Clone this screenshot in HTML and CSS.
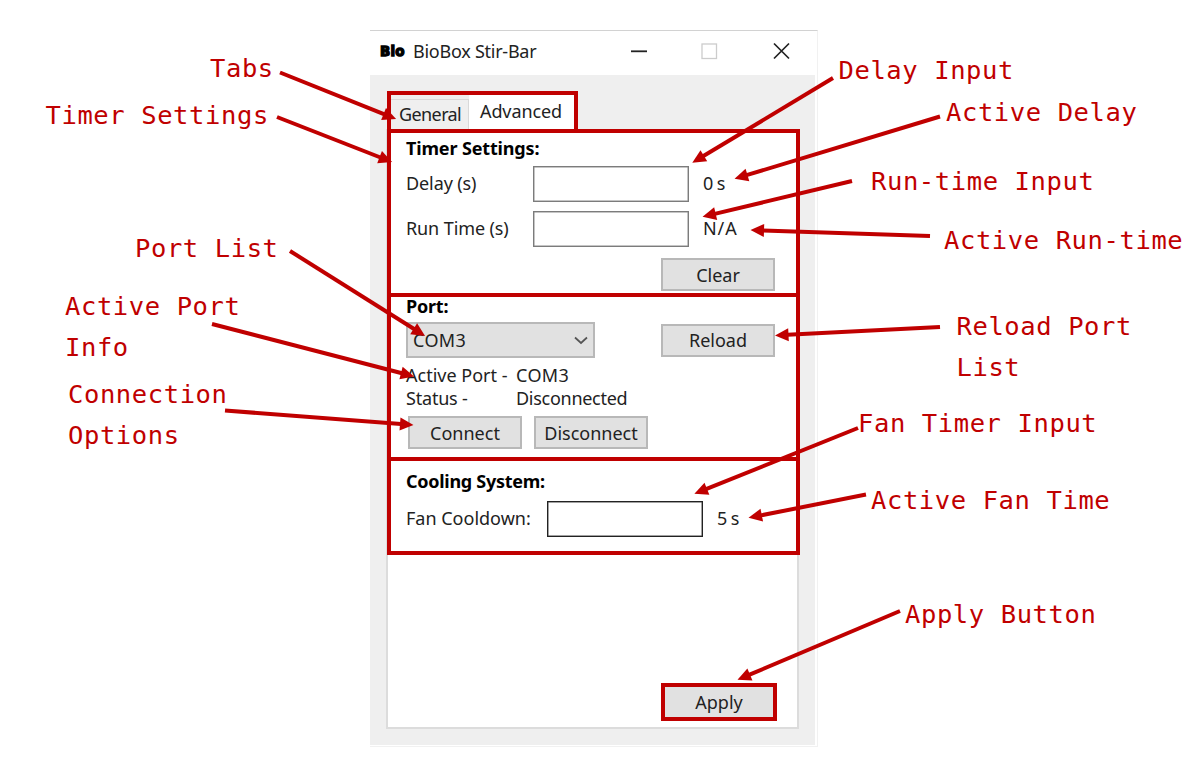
FILE: index.html
```html
<!DOCTYPE html>
<html lang="en">
<head>
<meta charset="utf-8">
<title>BioBox Stir-Bar</title>
<link rel="stylesheet" href="styles.css">
</head>
<body>
<main class="figure">
  <section class="window">
    <header class="titlebar">
      <span class="logo">Bio</span>
      <span class="title">BioBox Stir-Bar</span>
      <svg class="controls" width="160" height="18" viewBox="0 0 160 18">
        <path d="M1 9.3H17" stroke="#222" stroke-width="1.8"/>
        <rect x="72" y="2" width="14.500" height="14.500" fill="none" stroke="#ccc" stroke-width="1.3"/>
        <path d="M144 1.500L159 16.500M159 1.500L144 16.500" stroke="#222" stroke-width="1.7"/>
      </svg>
    </header>
    <div class="body">
      <nav class="tabs">
        <span class="tab general">General</span>
        <span class="tab active">Advanced</span>
      </nav>
      <div class="panel">
        <section class="group timer">
          <h2 class="heading w-timer">Timer Settings:</h2>
          <div class="field"><span class="w-delay">Delay (s)</span><i class="input"></i><span class="w-zero">0 s</span></div>
          <div class="field"><span class="w-run">Run Time (s)</span><i class="input"></i><span class="w-na">N/A</span></div>
          <button class="button end"><span class="w-clear">Clear</span></button>
        </section>
        <section class="group port">
          <h2 class="heading w-port">Port:</h2>
          <div class="port-row">
            <div class="combo"><span class="w-com">COM3</span>
              <svg width="14" height="9" viewBox="0 0 14 9"><path d="M1 1.500L7 7L13 1.500" fill="none" stroke="#555" stroke-width="1.7"/></svg>
            </div>
            <button class="button"><span class="w-reload">Reload</span></button>
          </div>
          <div class="info">
            <span class="w-active">Active Port -</span><span class="w-com">COM3</span>
            <span class="w-status">Status -</span><span class="w-disc">Disconnected</span>
          </div>
          <div class="buttons">
            <button class="button"><span class="w-connect">Connect</span></button>
            <button class="button"><span class="w-disconnect">Disconnect</span></button>
          </div>
        </section>
        <section class="group cooling">
          <h2 class="heading w-cooling">Cooling System:</h2>
          <div class="field fan"><span class="w-fan">Fan Cooldown:</span><i class="input dark"></i><span class="w-zero">5 s</span></div>
        </section>
        <button class="button apply"><span class="w-apply">Apply</span></button>
      </div>
    </div>
  </section>

  <svg class="callouts" width="1188" height="770" viewBox="0 0 1188 770">
    <defs>
      <marker id="head" markerUnits="userSpaceOnUse" markerWidth="20" markerHeight="16" refX="2" refY="7" orient="auto" overflow="visible">
        <path d="M1 0.500L14.500 7L1 13.500Z" fill="#c00000"/>
      </marker>
    </defs>
    <g class="arrows">
      <path d="M280 72.500L384.500 114.400"/>
      <path d="M277 117L380.500 157.500"/>
      <path d="M290 251L414.500 329.300"/>
      <path d="M212 324L402 373.300"/>
      <path d="M225 410.500L401 424"/>
      <path d="M833 78L703 156.300"/>
      <path d="M940 116.500L746.500 175.200"/>
      <path d="M852 181L714.700 213.900"/>
      <path d="M930 236L763 230.400"/>
      <path d="M940 327L787.500 334.800"/>
      <path d="M858 428L706 489.200"/>
      <path d="M866 494.500L760.800 515.400"/>
      <path d="M900 611L749 674.900"/>
    </g>
    <g class="labels">
      <text x="210" y="77">Tabs</text>
      <text x="45.500" y="124">Timer Settings</text>
      <text x="135" y="257">Port List</text>
      <text x="65" y="315">Active Port</text>
      <text x="65" y="356">Info</text>
      <text x="68" y="403">Connection</text>
      <text x="68" y="444">Options</text>
      <text x="838.500" y="79">Delay Input</text>
      <text x="946" y="121">Active Delay</text>
      <text x="871" y="190">Run-time Input</text>
      <text x="944" y="249">Active Run-time</text>
      <text x="956.500" y="335">Reload Port</text>
      <text x="956.500" y="376">List</text>
      <text x="858" y="432">Fan Timer Input</text>
      <text x="871" y="509">Active Fan Time</text>
      <text x="905" y="623">Apply Button</text>
    </g>
  </svg>
</main>
</body>
</html>
```
FILE: styles.css
```css
* { box-sizing: border-box; }

body {
  margin: 0;
  background: #fff;
  color: #222;
  font: 18px/24px "Noto Sans", sans-serif;
}

.figure {
  position: relative;
  width: 1188px;
  height: 770px;
  padding: 30px 370px 23px;
  overflow: hidden;
}

.window {
  width: 448px;
  height: 717px;
  border-top: 1px solid #d2d2d2;
  border-right: 1px solid #f1f1f1;
  border-bottom: 1px solid #f1f1f1;
  padding: 0 2px 1px 0;
}

.titlebar {
  display: flex;
  align-items: center;
  height: 44px;
  padding: 0 25px 4px 10px;
}

.logo {
  width: 33px;
  color: #000;
  font: bold 13.5px/22px "DejaVu Sans", sans-serif;
  letter-spacing: 0.2px;
  -webkit-text-stroke: 1.3px #000;
}

.title { letter-spacing: -0.25px; }

.controls { margin-left: auto; }

.body {
  height: 670px;
  padding: 16px 0 0 16px;
  background: #efefef;
}

.tabs {
  display: flex;
  align-items: flex-end;
  position: relative;
  width: 191px;
  height: 42px;
  margin-left: 1px;
  border: 4px solid #c00000;
}

.tab { height: 30px; line-height: 28px; }

.general {
  width: 78px;
  padding-left: 8px;
  border-top: 1px solid #d9d9d9;
  border-right: 1px solid #d9d9d9;
  letter-spacing: -0.6px;
}

.active {
  flex: 1;
  height: 34px;
  padding-left: 11px;
  background: #fff;
  line-height: 32px;
  letter-spacing: -0.1px;
}

.panel {
  display: flex;
  flex-direction: column;
  width: 413px;
  height: 600px;
  margin-top: -4px;
  border: 2px solid #dcdcdc;
  border-top: 0;
  background: #fff;
}

.group {
  position: relative;
  width: 413px;
  height: 168px;
  margin-left: -1px;
  padding-left: 15px;
  border: 4px solid #c00000;
}

.port, .cooling { margin-top: -4px; }
.cooling { height: 98px; }

.heading {
  height: 33px;
  margin: 0;
  color: #000;
  font-size: 18px;
  line-height: 31px;
}

.port .heading { height: 25px; line-height: 19px; }
.cooling .heading { height: 40px; line-height: 41px; }

.field {
  display: grid;
  grid-template-columns: 127px 156px 1fr;
  align-items: center;
  height: 36px;
  margin-bottom: 9px;
}

.fan { grid-template-columns: 141px 156px 1fr; }
.field span { padding-bottom: 2px; }
.field span:last-child { padding-left: 14px; }

.input {
  height: 36px;
  border: 1px solid #7c7c7c;
  box-shadow: inset 0 0 0 0.5px #8c8c8c;
  background: #fff;
}

.dark {
  border-color: #222;
  box-shadow: inset 0 0 0 0.5px #444;
}

.button {
  display: block;
  width: 114px;
  height: 33px;
  padding: 0;
  border: 2px solid #b8b8b8;
  border-radius: 0;
  background: #e1e1e1;
  color: #222;
  font: inherit;
  line-height: 28px;
}

.end { margin: 11px 0 0 255px; }

.port-row {
  display: flex;
  align-items: center;
  gap: 66px;
}

.combo {
  display: flex;
  align-items: center;
  justify-content: space-between;
  width: 189px;
  height: 36px;
  padding: 0 5px;
  border: 2px solid #b8b8b8;
  background: #e1e1e1;
}

.info {
  display: grid;
  grid-template-columns: 110px 1fr;
  grid-auto-rows: 23px;
  margin-top: 5px;
}

.buttons {
  display: flex;
  gap: 12px;
  margin: 7px 0 0 2px;
}

.apply {
  width: 116px;
  height: 38px;
  margin: auto 0 6px 273px;
  border: 4px solid #c00000;
}

.w-timer { letter-spacing: -0.15px; }
.w-port, .w-status { letter-spacing: -0.2px; }
.w-cooling, .w-disc { letter-spacing: -0.28px; }
.w-delay, .w-run { letter-spacing: -0.1px; }
.w-com { letter-spacing: 0.4px; }
.w-na { letter-spacing: 0.9px; }
.w-zero { letter-spacing: -0.6px; }

.callouts {
  position: absolute;
  inset: 0;
}

.arrows {
  fill: none;
  stroke: #c00000;
  stroke-width: 4;
}

.arrows path { marker-end: url(#head); }

.labels {
  fill: #c00000;
  font: 25.5px "DejaVu Sans Mono", monospace;
  letter-spacing: 0.6px;
}
```
